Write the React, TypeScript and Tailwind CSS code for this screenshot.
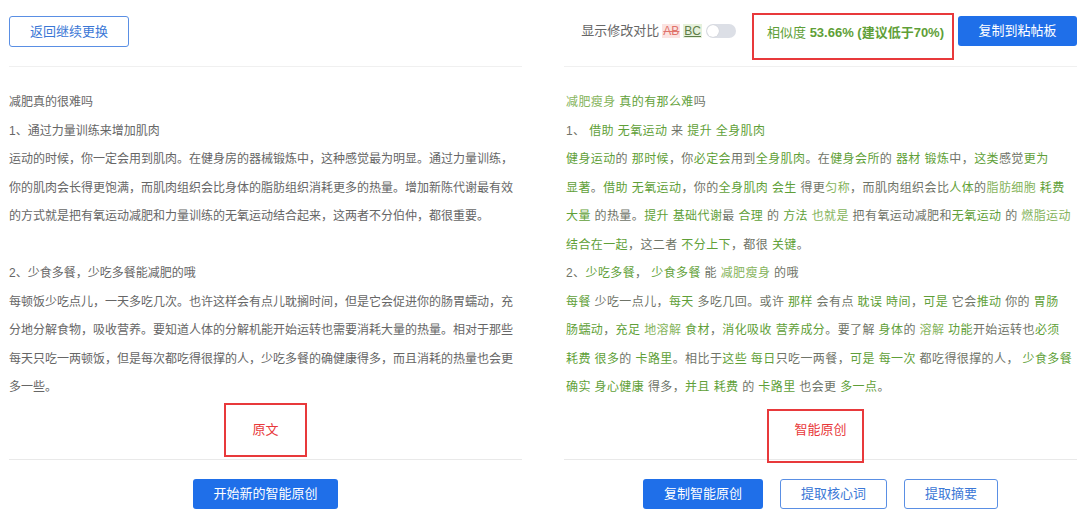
import React from 'react'

// ─── Content ──────────────────────────────────────────────────────────────────

const ORIGINAL = [
  '减肥真的很难吗',
  '1、通过力量训练来增加肌肉',
  '运动的时候，你一定会用到肌肉。在健身房的器械锻炼中，这种感觉最为明显。通过力量训练，',
  '你的肌肉会长得更饱满，而肌肉组织会比身体的脂肪组织消耗更多的热量。增加新陈代谢最有效',
  '的方式就是把有氧运动减肥和力量训练的无氧运动结合起来，这两者不分伯仲，都很重要。',
  '',
  '2、少食多餐，少吃多餐能减肥的哦',
  '每顿饭少吃点儿，一天多吃几次。也许这样会有点儿耽搁时间，但是它会促进你的肠胃蠕动，充',
  '分地分解食物，吸收营养。要知道人体的分解机能开始运转也需要消耗大量的热量。相对于那些',
  '每天只吃一两顿饭，但是每次都吃得很撑的人，少吃多餐的确健康得多，而且消耗的热量也会更',
  '多一些。',
]

type Tone = 'g' | 'l' | 'k'
type Seg = [string, Tone]

const TONE: Record<Tone, string> = {
  g: 'text-[#5f9f38]',
  l: 'text-[#86b45c]',
  k: 'text-[#6f7468]',
}

const REWRITE: Seg[][] = [
  [['减肥瘦身', 'l'], [' 真的有那么难', 'g'], ['吗', 'k']],
  [['1、 ', 'k'], ['借助', 'g'], [' 无氧运动 ', 'g'], ['来', 'k'], [' 提升 ', 'g'], ['全身肌肉', 'g']],
  [
    ['健身运动', 'g'], ['的 ', 'k'], ['那时候', 'g'], ['，你', 'k'], ['必定会', 'g'], ['用到', 'k'],
    ['全身肌肉', 'g'], ['。在', 'k'], ['健身会所', 'g'], ['的 ', 'k'], ['器材', 'g'], [' 锻炼', 'g'],
    ['中，', 'k'], ['这类', 'g'], ['感觉', 'k'], ['更为', 'g'],
  ],
  [
    ['显著', 'g'], ['。', 'k'], ['借助', 'g'], [' 无氧运动', 'g'], ['，你的', 'k'], ['全身肌肉', 'g'],
    [' 会生 ', 'g'], ['得更', 'k'], ['匀称', 'l'], ['，而肌肉组织会比', 'k'], ['人体', 'g'], ['的', 'k'],
    ['脂肪细胞', 'l'], [' 耗费', 'g'],
  ],
  [
    ['大量', 'g'], [' 的热量。', 'k'], ['提升', 'g'], [' 基础代谢', 'g'], ['最 ', 'k'], ['合理', 'g'],
    [' 的 ', 'k'], ['方法', 'g'], [' 也就是', 'l'], [' 把有氧运动减肥和', 'k'], ['无氧运动', 'g'],
    [' 的 ', 'k'], ['燃脂运动', 'l'],
  ],
  [['结合在一起', 'g'], ['，这二者', 'k'], [' 不分上下', 'g'], ['，都很 ', 'k'], ['关键', 'g'], ['。', 'k']],
  [['2、', 'k'], ['少吃多餐', 'g'], ['，', 'k'], [' 少食多餐', 'g'], [' 能 ', 'k'], ['减肥瘦身', 'l'], [' 的哦', 'k']],
  [
    ['每餐', 'g'], [' 少吃一点儿', 'k'], ['，', 'k'], ['每天', 'g'], [' 多吃几回', 'k'], ['。或许 ', 'k'],
    ['那样', 'g'], [' 会有点 ', 'k'], ['耽误', 'g'], [' 時间', 'g'], ['，', 'k'], ['可是', 'g'],
    [' 它会', 'k'], ['推动', 'g'], [' 你的', 'k'], [' 胃肠', 'g'],
  ],
  [
    ['肠蠕动', 'g'], ['，', 'k'], ['充足', 'g'], [' 地溶解', 'l'], [' 食材', 'g'], ['，', 'k'],
    ['消化吸收', 'g'], [' 营养成分', 'g'], ['。要了解', 'k'], [' 身体', 'g'], ['的', 'k'], [' 溶解', 'l'],
    [' 功能', 'g'], ['开始运转也', 'k'], ['必须', 'g'],
  ],
  [
    ['耗费', 'g'], [' 很多', 'g'], ['的 ', 'k'], ['卡路里', 'g'], ['。相比于', 'k'], ['这些', 'g'],
    [' 每日', 'g'], ['只吃一两餐', 'k'], ['，', 'k'], ['可是', 'g'], [' 每一次', 'g'],
    [' 都吃得很撑的人，', 'k'], [' 少食多餐', 'g'],
  ],
  [
    ['确实', 'g'], [' 身心健康', 'g'], [' 得多', 'k'], ['，', 'k'], ['并且', 'g'], [' 耗费', 'g'],
    [' 的', 'k'], [' 卡路里', 'g'], [' 也会更', 'k'], [' 多一点', 'g'], ['。', 'k'],
  ],
]

const FONT = { fontFamily: '"Liberation Sans", "Noto Sans CJK SC", sans-serif' }

const BTN_SOLID =
  'h-[30px] rounded-[3px] bg-[#1f6fe9] text-[13px] text-white flex items-center justify-center'
const BTN_LINE =
  'h-[30px] rounded-[3px] border border-[#5a8fe4] bg-white text-[13px] text-[#3b77d6] flex items-center justify-center'

// ─── Page ─────────────────────────────────────────────────────────────────────

export default function App() {
  return (
    <div className="w-[1080px] h-[516px] bg-white overflow-hidden" style={FONT}>
      <div className="flex pl-[9px] gap-[42px]">
        {/* 原文 */}
        <section className="w-[513px] flex flex-col">
          <div className="h-[67px] border-b border-[#f0f0f0] pt-[16px]">
            <button className={`${BTN_LINE} w-[120px] h-[31px]`}>返回继续更换</button>
          </div>

          <div className="pt-[21px] text-[12px] leading-[28.5px] text-[#666]">
            {ORIGINAL.map((line, i) => (
              <div key={i} className="whitespace-nowrap h-[28.5px]">{line}</div>
            ))}
          </div>

          <div className="h-[58px] border-b border-[#e9e9e9] flex items-center justify-center">
            <Marked left={28} right={28} top={20} bottom={20}>原文</Marked>
          </div>

          <div className="pt-[19px] flex justify-center">
            <button className={`${BTN_SOLID} w-[145px]`}>开始新的智能原创</button>
          </div>
        </section>

        {/* 智能原创 */}
        <section className="w-[513px] flex flex-col">
          <div className="h-[67px] border-b border-[#f0f0f0] pt-[13px] flex items-start justify-end">
            <div className="mt-[8px] h-[20px] flex items-center text-[13px] text-[#666]">
              <span>显示修改对比</span>
              <span className="ml-[3px] text-[12px] leading-[14px] px-[1px] bg-[#fbe3e1] text-[#e0736b] line-through">AB</span>
              <span className="ml-[3px] text-[12px] leading-[14px] px-[1px] bg-[#e6f1dc] text-[#5d7d48] underline">BC</span>
              <span className="ml-[4px] w-[30px] h-[14px] rounded-full bg-[#dcdfe6] flex items-center px-[1px]">
                <span className="w-[12px] h-[12px] rounded-full bg-white shadow-[0_0_1px_rgba(0,0,0,0.2)]" />
              </span>
            </div>

            <div className="ml-[16px] w-[202px] h-[47px] border-2 border-[#e8393b] pl-[13px] pt-[8px] text-[13px] leading-[20px] text-[#5f9f38] whitespace-nowrap">
              相似度 <span className="font-bold">53.66% (建议低于70%)</span>
            </div>

            <button className={`${BTN_SOLID} ml-[4px] mt-[3px] w-[119px] h-[29px]`}>复制到粘帖板</button>
          </div>

          <div className="pt-[21px] pl-[2px] text-[12px] leading-[28.5px] tracking-[0.4px]">
            {REWRITE.map((line, i) => (
              <div key={i} className="whitespace-pre h-[28.5px]">
                {line.map(([t, tone], j) => (
                  <span key={j} className={TONE[tone]}>{t}</span>
                ))}
              </div>
            ))}
          </div>

          <div className="h-[58px] border-b border-[#e9e9e9] flex items-center justify-center">
            <Marked left={27} right={17} top={14} bottom={26}>智能原创</Marked>
          </div>

          <div className="pt-[19px] flex justify-center gap-[17px]">
            <button className={`${BTN_SOLID} w-[120px]`}>复制智能原创</button>
            <button className={`${BTN_LINE} w-[107px]`}>提取核心词</button>
            <button className={`${BTN_LINE} w-[94px]`}>提取摘要</button>
          </div>
        </section>
      </div>
    </div>
  )
}

// red annotation frame drawn over the label
function Marked({
  children,
  left,
  right,
  top,
  bottom,
}: {
  children: React.ReactNode
  left: number
  right: number
  top: number
  bottom: number
}) {
  return (
    <span className="relative text-[13px] leading-[14px] text-[#e8393b]">
      {children}
      <span
        className="absolute border-2 border-[#e8393b] pointer-events-none"
        style={{ left: -left, right: -right, top: -top, bottom: -bottom }}
      />
    </span>
  )
}
